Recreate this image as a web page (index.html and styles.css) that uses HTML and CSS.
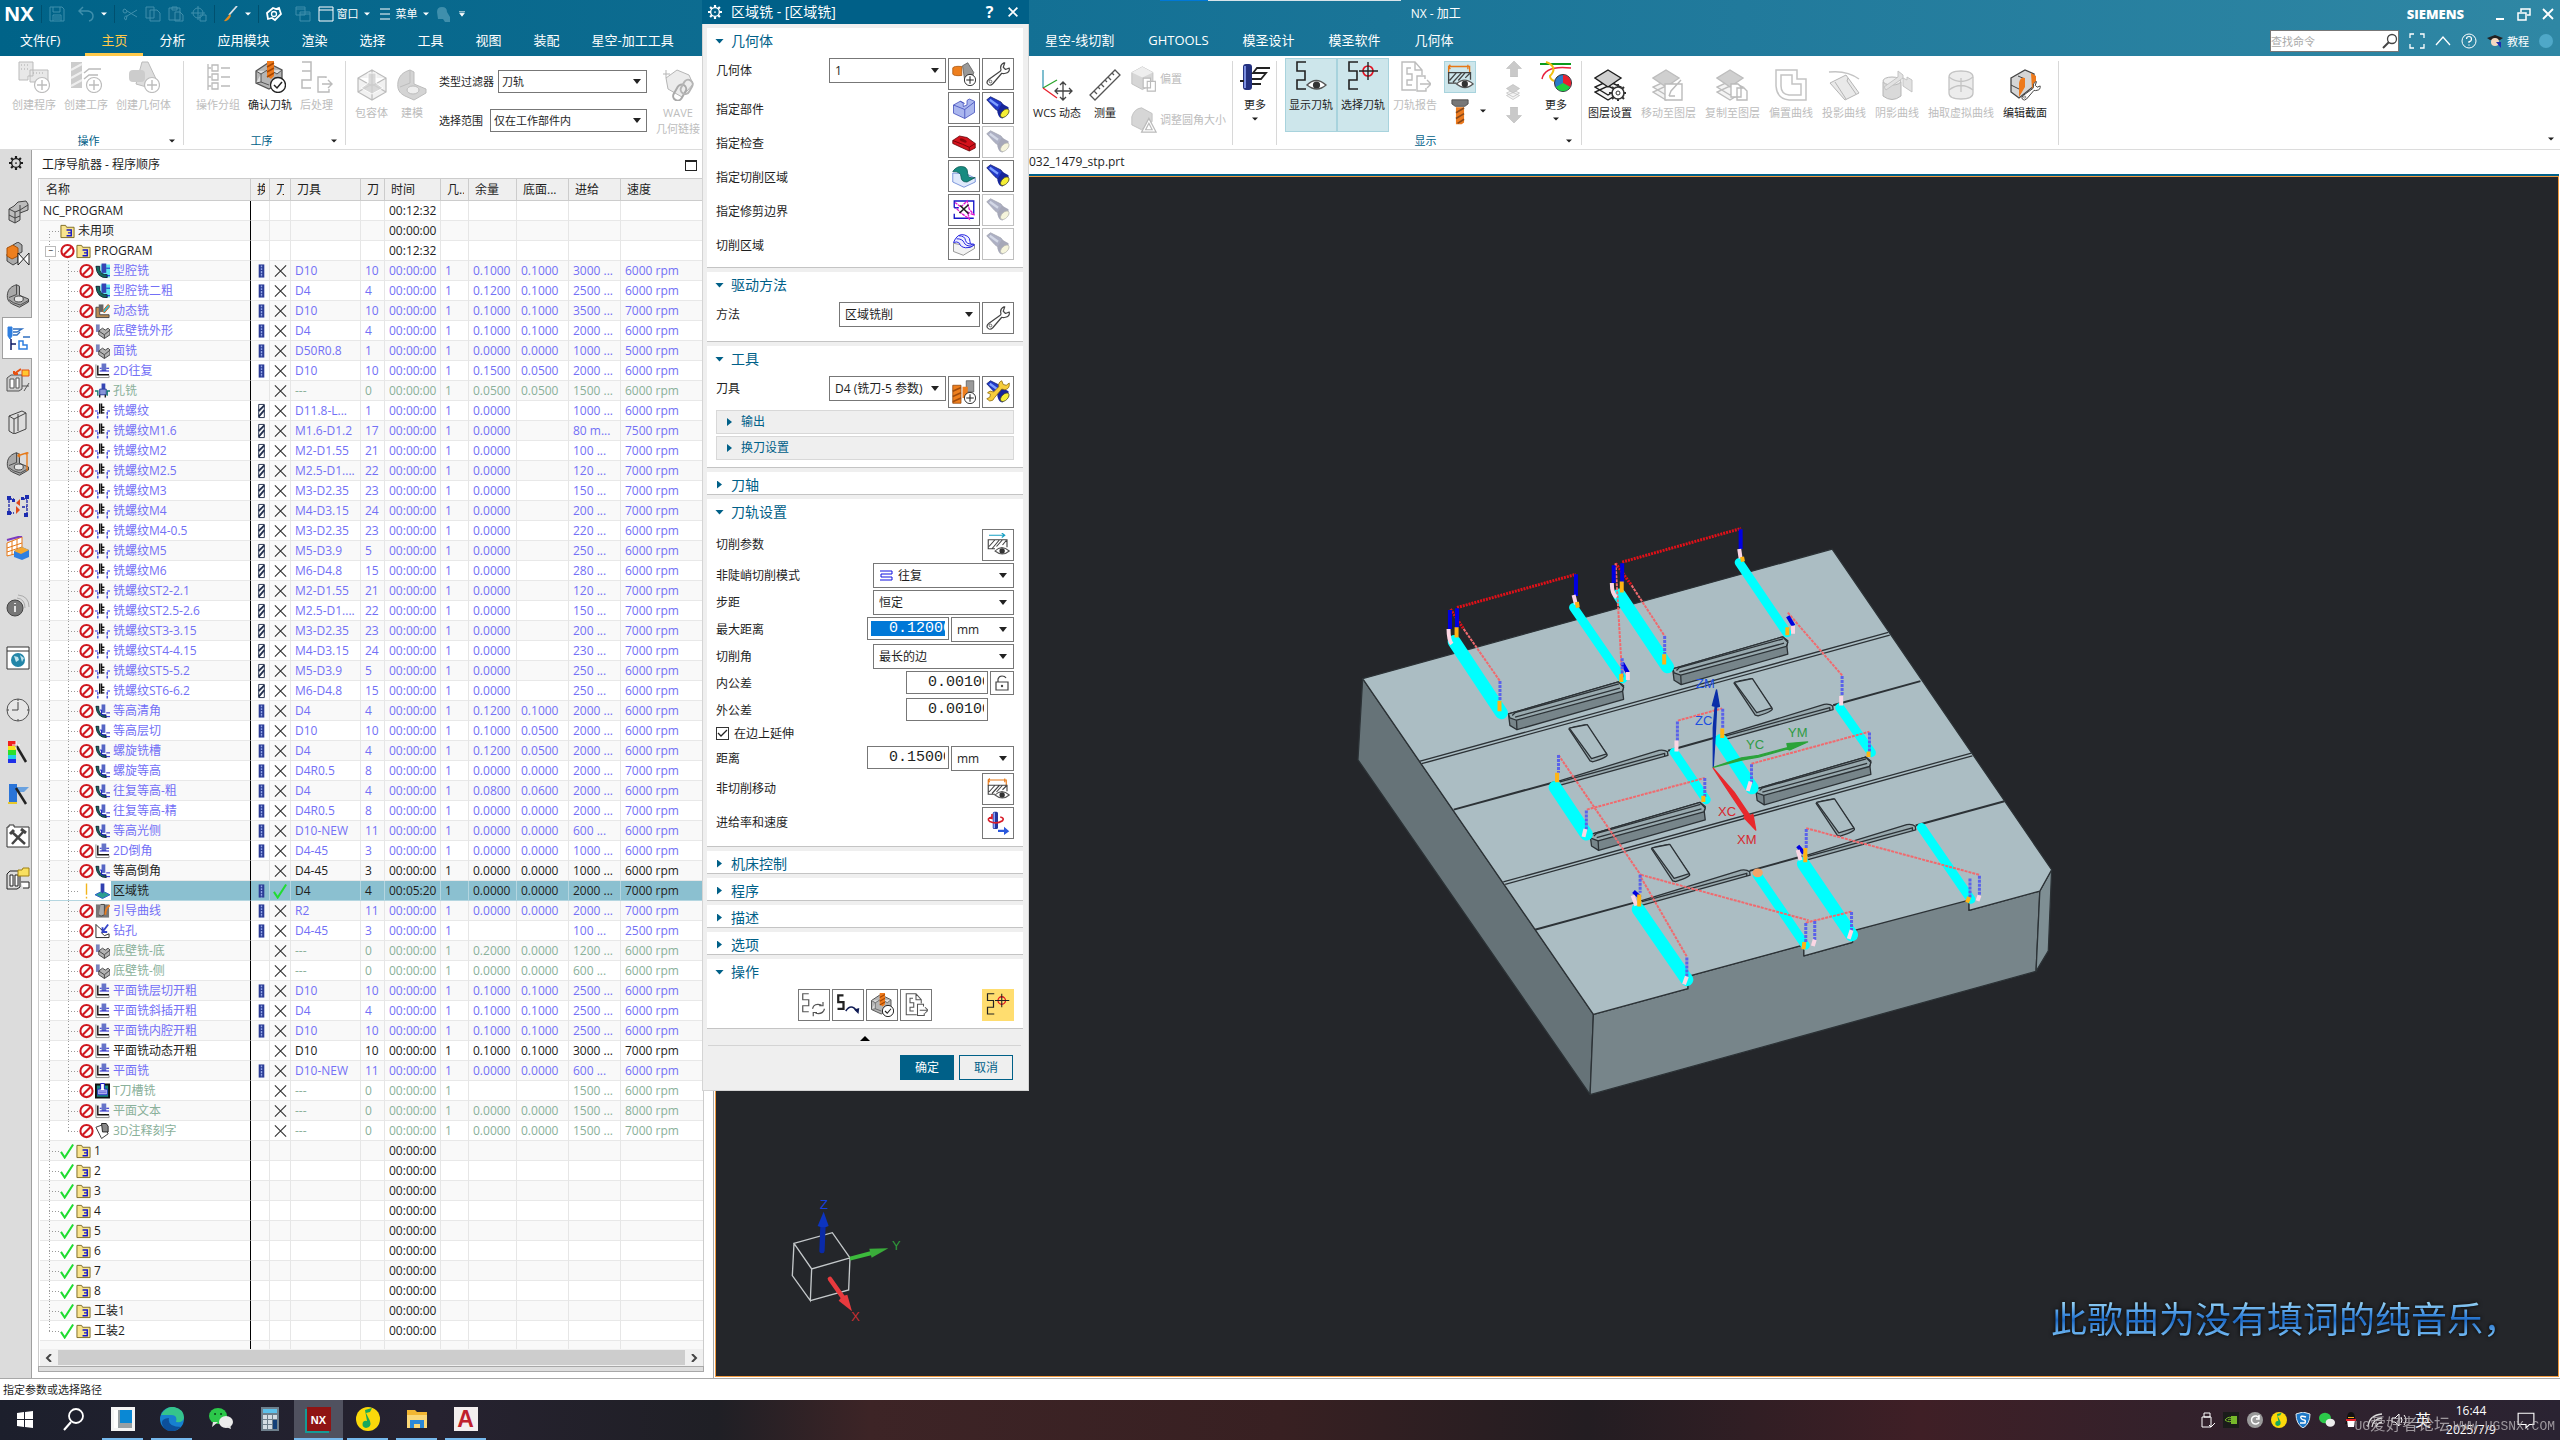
FILE: index.html
```html
<!DOCTYPE html>
<html lang="zh-CN">
<head>
<meta charset="utf-8">
<title>NX - 加工</title>
<link rel="stylesheet" href="styles.css">
</head>
<body>
<svg class="defs" aria-hidden="true">
  <!-- shared marks -->
  <symbol id="caret" viewBox="0 0 8 8"><path d="M0 2h8L4 6z" fill="currentColor"/></symbol>
  <symbol id="plus" viewBox="0 0 32 32"><circle cx="24" cy="24" r="7.500" fill="#fff" stroke="currentColor" stroke-width="1.200"/><path d="M24 19v10M19 24h10" stroke="currentColor" stroke-width="1.400"/></symbol>
  <!-- ribbon -->
  <symbol id="r-prog" viewBox="0 0 32 32"><path d="M1 1h14v14H10v4H1zM12 9h18v12H12z" fill="#e8e8e8" stroke="#bbb"/><path d="M3 4h9M3 8h9M15 12h12" stroke="#aaa" stroke-dasharray="1 2"/><use href="#plus"/></symbol>
  <symbol id="r-op" viewBox="0 0 32 32"><path d="M1 1h11v26H1z" fill="#ccc"/><path d="M1 9l11-6M1 17l11-6M1 25l11-6" stroke="#eee" stroke-width="2"/><path d="M14 12l5-4h12M14 18l5-4h9" stroke="#bbb" fill="none" stroke-width="1.500"/><use href="#plus"/></symbol>
  <symbol id="r-geom" viewBox="0 0 32 32"><path d="M14 1h6l9 19-7 7-14-4z" fill="#ddd" stroke="#bbb"/><rect x="1" y="9" width="16" height="12" rx="4" fill="#ccc"/><use href="#plus"/></symbol>
  <symbol id="r-group" viewBox="0 0 32 32"><path d="M6 3v26M6 7h3M6 16h3M6 25h3M19 7h9M19 16h9M19 25h9" stroke="#bbb" stroke-width="1.300" fill="none"/><path d="M10 4h6v6h-6zM10 13h6v6h-6zM10 22h6v6h-6z" fill="#fff" stroke="#bbb" stroke-width="1.300"/></symbol>
  <symbol id="r-verify" viewBox="0 0 32 32"><path d="M2 10l12-8 14 7v11l-13 8L2 22z" fill="#b5b5b5" stroke="#555" stroke-width="1.300"/><path d="M2 10l5 3 8-5 8 5 5-4M7 13v8l-5 1M7 21l8 3" fill="#ddd" stroke="#555"/><path d="M13 0h7v15l-3 3-4-3z" fill="#ee7a1c"/><path d="M13 6l7-4M13 11l7-4M13 16l7-4" stroke="#a64700" stroke-width="1.500"/><circle cx="24" cy="24" r="7.500" fill="#fff" stroke="#222" stroke-width="1.300"/><path d="M20 24l3 3 5-6" stroke="#222" stroke-width="1.500" fill="none"/></symbol>
  <symbol id="r-post" viewBox="0 0 32 32"><path d="M1 1h9v9H1M10 10v9H1v8h9" stroke="#bbb" fill="none" stroke-width="1.500"/><path d="M25 17v-1h-8v15h11v-3M21 23h10M27 19l4 4-4 4" stroke="#bbb" fill="none" stroke-width="1.400"/></symbol>
  <symbol id="r-box" viewBox="0 0 32 32"><path d="M16 1l14 8v14l-14 8-14-8V9zM2 9l14 8 14-8M16 17v14M2 23l14-8 14 8M16 1v16" fill="#f1f1f1" stroke="#bbb" stroke-width="1.200"/><path d="M12 4h8v10l7 5-11 6-11-6 7-5z" fill="#d2d2d2" stroke="#fff" opacity=".8"/></symbol>
  <symbol id="r-model" viewBox="0 0 32 32"><path d="M2 13C3 7 7 3 14 1l4 2v12l12 5v4l-12 7-9-4C3 24 1 20 2 13z" fill="#d4d4d4" stroke="currentColor"/><path d="M14 1v13L4 18" fill="none" stroke="currentColor"/><ellipse cx="17" cy="21" rx="6" ry="4" fill="#eee" stroke="currentColor"/></symbol>
  <symbol id="l-model" viewBox="0 0 32 32"><path d="M2 13C3 7 7 3 14 1l4 2v12l12 5v4l-12 7-9-4C3 24 1 20 2 13z" fill="#a9a9a9" stroke="#444" stroke-width="1.300"/><path d="M14 1v13L4 18M4 21l6 4 9 3 11-6" fill="none" stroke="#444" stroke-width="1.200"/><ellipse cx="17" cy="20" rx="6" ry="4" fill="#e6e6e6" stroke="#444" stroke-width="1.300"/></symbol>
  <symbol id="r-wave" viewBox="0 0 32 32"><path d="M1 5h7M4 1v8M15 1l12 5 4 9-11 13L6 20 4 9z" fill="#ececec" stroke="#b5b5b5"/><rect x="14" y="15" width="9" height="17" rx="4.500" transform="rotate(30 18 22)" fill="none" stroke="#aaa" stroke-width="2"/><rect x="20" y="10" width="9" height="15" rx="4.500" transform="rotate(30 24 18)" fill="none" stroke="#b5b5b5" stroke-width="2"/></symbol>
  <symbol id="r-wcs" viewBox="0 0 32 32"><path d="M2 1v18" stroke="#3a9bb5" stroke-width="1.300"/><path d="M2 19L16 11" stroke="#2aa42a" stroke-width="1.300"/><path d="M2 19l14 10" stroke="#e8202c" stroke-width="1.300"/><path d="M22 13v18M14 22h17M19 16l3-3 3 3M19 28l3 3 3-3M17 19l-3 3 3 3M28 19l3 3-3 3" stroke="#444" stroke-width="1.300" fill="none"/></symbol>
  <symbol id="r-rule" viewBox="0 0 32 32"><path d="M26 1l5 5L6 31l-5-5zM5 22l3 3M9 18l2 2M12 15l3 3M16 11l2 2M19 8l3 3M23 4l2 2" fill="#fff" stroke="#555" stroke-width="1.300"/></symbol>
  <symbol id="r-off" viewBox="0 0 32 32"><path d="M1 8l13-7 13 7v14l-13 7-13-7z" fill="#d6d6d6" stroke="#bbb"/><path d="M1 8l13 6 13-6-13-7z" fill="#eee"/><path d="M15 15h9v12h-9zM20 19h10v12H20z" fill="#fff" stroke="#bbb" stroke-width="1.400"/></symbol>
  <symbol id="r-blend" viewBox="0 0 32 32"><path d="M1 12Q4 2 13 1l13 7v10L13 28 1 22z" fill="#d6d6d6" stroke="#bbb"/><path d="M22 14l9 17H13zM22 20l4 8h-8z" fill="#fff" stroke="#bbb" stroke-width="1.500"/></symbol>
  <symbol id="r-more1" viewBox="0 0 32 32"><rect x="4" y="3" width="9" height="26" rx="3" fill="#23307f"/><path d="M6 5v22" stroke="#7b8ee0" stroke-width="2"/><path d="M31 7H18l-4 5h13l-5 6h-9M1 20h4M13 23h9" stroke="#222" stroke-width="1.800" fill="none"/></symbol>
  <symbol id="snake" viewBox="0 0 32 32"><path d="M11 1H2v9h8v9H2v9h9" stroke="currentColor" stroke-width="1.600" fill="none"/></symbol>
  <symbol id="eye" viewBox="0 0 32 32"><path d="M12 24q9-9 19 0-9 8-19 0z" fill="#fff" stroke="#555" stroke-width="1.400"/><circle cx="21.500" cy="24" r="3.600" fill="#333"/></symbol>
  <symbol id="r-show" viewBox="0 0 32 32"><use href="#snake"/><use href="#eye"/></symbol>
  <symbol id="r-pick" viewBox="0 0 32 32"><use href="#snake"/><circle cx="21" cy="10" r="5" fill="none" stroke="#e01020" stroke-width="1.700"/><path d="M21 1v18M12 10h19" stroke="#222" stroke-width="1.400"/></symbol>
  <symbol id="r-report" viewBox="0 0 32 32"><path d="M17 29H3V1h13l7 8v5M16 1v8h7M12 7H8v6h5v6H8v5h5" stroke="currentColor" stroke-width="1.400" fill="none"/><path d="M26 18v-3H18v15h9v-3M21 23h10M28 19l4 4-4 4" stroke="currentColor" stroke-width="1.400" fill="none"/></symbol>
  <symbol id="r-noncut" viewBox="0 0 32 32"><path d="M3 11V4h24v7M5 2L3 4l2 3M25 2v5" stroke="#e67817" stroke-width="1.500" fill="none"/><path d="M28 19v-8H3v12h9M4 20l8-9M8 22l10-11M14 20l8-9M22 17l5-5" stroke="#444" stroke-width="1.500" fill="none"/><use href="#eye"/></symbol>
  <symbol id="r-cutparam" viewBox="0 0 32 32"><path d="M4 3h20M21 0l4 3-4 3" stroke="#16a0c4" stroke-width="1.500" fill="none"/><path d="M28 19V9H3v12h9M4 18l8-9M8 21l10-12M14 18l8-9M22 16l5-6" stroke="#444" stroke-width="1.500" fill="none"/><use href="#eye"/></symbol>
  <symbol id="r-drill" viewBox="0 0 32 32"><path d="M6 1h20v5l-4 3H10L6 6z" fill="#777" stroke="#444"/><path d="M11 10h10v19l-3 2h-7z" fill="#ec7a1e"/><path d="M11 17l10-6M11 24l10-6M13 30l8-5" stroke="#8b4a18" stroke-width="2"/></symbol>
  <symbol id="r-up" viewBox="0 0 32 32"><path d="M16 0l15 15h-8v17H9V15H1z" fill="#c9c9c9" stroke="#b5b5b5"/></symbol>
  <symbol id="r-down" viewBox="0 0 32 32"><path d="M16 32L1 17h8V0h14v17h8z" fill="#c9c9c9" stroke="#b5b5b5"/></symbol>
  <symbol id="stack" viewBox="0 0 32 32"><path d="M14 17l13 6-13 8L1 23zM14 12l13 6-13 8L1 18z" fill="#f4f4f4" stroke="currentColor" stroke-width="1.400"/><path d="M14 1l13 8-13 9L1 9z" fill="#cfcfcf" stroke="currentColor" stroke-width="1.400"/></symbol>
  <symbol id="r-color" viewBox="0 0 32 32"><path d="M0 3h31" stroke="#0a9a1c" stroke-width="2"/><path d="M2 18C4 8 14 5 31 7" stroke="#e8203c" fill="none" stroke-width="1.500"/><path d="M6 1c8 3 10 8 4 14 0 3 2 4 4 5" stroke="#f0c010" fill="none" stroke-width="2"/><circle cx="23" cy="22" r="8.500" fill="#2a7ac8" stroke="#333"/><path d="M23 22v-8a8 8 0 0 1 7 12z" fill="#e8202c"/><path d="M23 22l7 4a8 8 0 0 1-14 0z" fill="#1fd03c"/></symbol>
  <symbol id="r-layset" viewBox="0 0 32 32"><use href="#stack"/><circle cx="24" cy="24" r="6" fill="#fff" stroke="#333" stroke-width="1.600"/><circle cx="24" cy="24" r="2" fill="none" stroke="#333"/><path d="M24 15v3M24 30v2M15 24h3M30 24h2M18 18l2 2M28 28l2 2M30 18l-2 2M18 30l2-2" stroke="#333" stroke-width="2"/></symbol>
  <symbol id="r-laymove" viewBox="0 0 32 32"><use href="#stack"/><path d="M13 15h17v16H13zM17 27l2-5 10-11M17 27h6" fill="#fff" stroke="#bbb" stroke-width="1.400"/></symbol>
  <symbol id="r-laycopy" viewBox="0 0 32 32"><use href="#stack"/><path d="M15 15h7l3 3v10H15zM21 19h7l3 3v9H21z" fill="#fff" stroke="#bbb" stroke-width="1.400"/></symbol>
  <symbol id="r-offc" viewBox="0 0 32 32"><path d="M1 1h21v9h9v21H14Q2 30 1 17z" fill="#fff" stroke="#c4c4c4" stroke-width="1.500"/><path d="M6 6h11v9h9v11H14Q6 25 6 17z" fill="none" stroke="#c4c4c4" stroke-width="1.500"/></symbol>
  <symbol id="r-proj" viewBox="0 0 32 32"><path d="M1 3q18-2 30 7" fill="none" stroke="#c4c4c4" stroke-width="1.500"/><path d="M2 14l16-8 13 18-14 7z" fill="#e9e9e9" stroke="#b5b5b5"/><path d="M7 13l11 17M20 9l-1 3 9 13" fill="none" stroke="#b5b5b5"/></symbol>
  <symbol id="r-shad" viewBox="0 0 32 32"><path d="M2 13v14q9 7 18 0V13z" fill="#d9d9d9" stroke="#b5b5b5"/><ellipse cx="11" cy="12" rx="9" ry="4" fill="#eee" stroke="#b5b5b5"/><path d="M17 2l5 4v3l4 2V8l5 3v12l-9-6V9L5 21l-2-3L17 8z" fill="#e2e2e2" stroke="#c4c4c4"/></symbol>
  <symbol id="r-ext" viewBox="0 0 32 32"><path d="M4 8q0-6 12-6t12 6v16q0 6-12 6T4 24z" fill="#ececec" stroke="#c4c4c4" stroke-width="1.300"/><path d="M4 8q12 9 24 0M4 21q12-9 24 0M16 9v14" fill="none" stroke="#c4c4c4" stroke-width="1.300"/></symbol>
  <symbol id="r-sect" viewBox="0 0 32 32"><path d="M2 9l14-8 9 4v12l-15 12-8-6z" fill="#d5d5d5" stroke="#444" stroke-width="1.300"/><path d="M2 16l8 4M9 7l7 3" stroke="#444"/><path d="M10 14q1-6 6-5v9l-6 10zM22 4l5 3v9l-4 4z" fill="#ee7a1c"/><use href="#wrench" transform="translate(12 12) scale(.62)"/></symbol>
  <symbol id="wrench" viewBox="0 0 32 32"><path d="M20 10q-2-6 4-9l1 0-2 6 3 3 5-2q1 6-5 7-3 1-5 0L9 29q-4 4-7 0-2-3 2-6l14-10q2-1 2-3z" fill="#fff" stroke="#444" stroke-width="1.600" stroke-linejoin="round"/><circle cx="6" cy="26" r="1.800" fill="none" stroke="#444"/></symbol>
  <!-- dialog -->
  <symbol id="d-geom" viewBox="0 0 32 32"><path d="M14 5l7-4 8 13-3 9-9 2z" fill="#999" stroke="#555"/><path d="M1 8q1-3 12-2v12Q2 19 1 16z" fill="#ee7f1e" stroke="#a75008"/><use href="#plus"/></symbol>
  <symbol id="d-part" viewBox="0 0 32 32"><path d="M2 12l9-5 4 2v5l5-2V6l3-2 7 3v15l-13 8-15-7z" fill="#aab6ee" stroke="#3a45b8"/><path d="M2 12l15 6 13-10M17 18v12M11 7l6 3" fill="none" stroke="#3a45b8"/></symbol>
  <symbol id="flash" viewBox="0 0 32 32"><path d="M1 5l5-4 14 7 3 4-7 8-4-3z" fill="#2139c8" stroke="#101c66"/><path d="M5 5l11 8" stroke="#7fa0ff" stroke-width="3"/><path d="M21 10l9 5v7l-8 8q-5 0-7-9z" fill="#16259a"/><ellipse cx="25" cy="23" rx="4" ry="7" transform="rotate(45 25 23)" fill="#f4ee36" stroke="#4d4d20"/></symbol>
  <symbol id="d-clamp" viewBox="0 0 32 32"><path d="M1 14l9-6 10 2 11 8v6l-8 4-9-4-13-6z" fill="#d4121c" stroke="#5c0004"/><path d="M1 14l13 5 9 4 8-5M23 23v5" fill="none" stroke="#5c0004"/><ellipse cx="15" cy="14" rx="5" ry="2" transform="rotate(25 15 14)" fill="#8c060c"/></symbol>
  <symbol id="d-area" viewBox="0 0 32 32"><path d="M1 12v12l15 7 15-7v-5l-12-6z" fill="#dfe9fb" stroke="#5a79d0"/><path d="M1 10q6-9 16-6 4 2 4 9t10 5l-11 6q-8 0-8-7T1 10z" fill="#178b80" stroke="#0a5750"/></symbol>
  <symbol id="d-trim" viewBox="0 0 32 32"><path d="M3 13V4h26v18M3 21v6h26M3 13h6" fill="none" stroke="#1616c8" stroke-width="1.800"/><path d="M4 6l8 6 8-8 3 11 7 8-9-4 2 9-11-8-7-7" fill="none" stroke="#e016d0" stroke-width="1.800" stroke-dasharray="4 1"/><path d="M11 10l11 11M22 9L10 20" stroke="#222" stroke-width="2.200"/></symbol>
  <symbol id="d-region" viewBox="0 0 32 32"><path d="M2 15v11l13 5 15-9v-5l-8 2z" fill="#f2f2f2" stroke="#777"/><path d="M2 14Q7 1 17 4l4 2q3 2 3 7t6 4q-5 5-12 4T10 15q-3-3-8-1zM6 9q8 0 10 5t11 5M9 5q8 0 9 6t11 5" fill="#eef" stroke="#2222e0" stroke-width="1.300"/></symbol>
  <symbol id="d-tool" viewBox="0 0 32 32"><path d="M1 7h11v24H1z" fill="#ee7f1e" stroke="#8c4208"/><path d="M1 15l11-5M1 22l11-5M1 29l11-5" stroke="#a04c0c" stroke-width="2"/><path d="M19 1h10v15H19z" fill="#999" stroke="#555"/><path d="M14 9h7v15h-7z" fill="#ee7f1e"/><use href="#plus"/></symbol>
  <symbol id="d-edit" viewBox="0 0 32 32"><use href="#flash"/><path d="M17 9q-1-6 4-8l2 5 4 1 4-3q1 8-6 9l-4-1L11 24q-1 4-6 4l-4-3 4-2 1-4-4-2q3-4 8-1z" fill="#f6cd3c" stroke="#8a6508"/></symbol>
  <symbol id="d-feed" viewBox="0 0 32 32"><rect x="9" y="1" width="7" height="23" rx="2" fill="#24369c"/><path d="M11 2v21" stroke="#8ea6ff" stroke-width="2"/><path d="M8 8q-8 2-3 6 9 4 17-1 3-4-3-5M8 4v6l-4-1" fill="none" stroke="#d81c28" stroke-width="2.200"/><path d="M16 25h8v-4l7 6-7 5v-4h-8z" fill="#2a58dc"/></symbol>
  <symbol id="d-gen" viewBox="0 0 32 32"><path d="M9 1H1v8h8v8H1v8h8" stroke="#555" fill="none" stroke-width="1.600"/><path d="M14 21q2-8 12-5M28 12v5h-5M30 21q-2 8-12 6M15 31v-5h5" fill="none" stroke="#555" stroke-width="1.600"/></symbol>
  <symbol id="d-replay" viewBox="0 0 32 32"><path d="M10 3H3v9h7v9H2" stroke="#222" fill="none" stroke-width="3"/><path d="M13 24q7-11 15 0" fill="none" stroke="#101c55" stroke-width="2"/><path d="M24 22l7-2-1 8z" fill="#101c55"/></symbol>
  <symbol id="gear" viewBox="0 0 16 16"><path d="M8 0v3M8 13v3M0 8h3M13 8h3M2.400 2.400l2 2M11.600 11.600l2 2M13.600 2.400l-2 2M2.400 13.600l2-2" stroke="currentColor" stroke-width="2.500"/><circle cx="8" cy="8" r="5" fill="none" stroke="currentColor" stroke-width="1.600"/><circle cx="8" cy="8" r="1" fill="currentColor"/></symbol>
  <!-- operation tree -->
  <symbol id="folder" viewBox="0 0 16 16"><path d="M1 2h5l1 2h8v11H1z" fill="#f8e38e" stroke="#7d6a20"/><path d="M7 7h5v3H8.500M12 10v3H7" fill="none" stroke="#1818c8" stroke-width="1.500"/></symbol>
  <symbol id="no" viewBox="0 0 16 16"><circle cx="8" cy="8" r="6.500" fill="#fff" stroke="#cf1820" stroke-width="2.200"/><path d="M4 12l8-8" stroke="#cf1820" stroke-width="2.200"/></symbol>
  <symbol id="ok" viewBox="0 0 16 16"><path d="M1 9l4 6L14 1" fill="none" stroke="#21dc32" stroke-width="2.200"/></symbol>
  <symbol id="ex" viewBox="0 0 16 16"><path d="M8 0v12M8 14v2" stroke="#f2b51c" stroke-width="1.500"/></symbol>
  <symbol id="x" viewBox="0 0 16 16"><path d="M2 2l12 12M14 2L2 14" stroke="#333" stroke-width="1.200"/></symbol>
  <symbol id="ta" viewBox="0 0 16 16"><path d="M5 1h6v14H5z" fill="#2b3c96"/><path d="M8 2v13" stroke="#93a6e6" stroke-width="1.500" stroke-dasharray="2 1"/></symbol>
  <symbol id="tb" viewBox="0 0 16 16"><path d="M5 1h6v14H5z" fill="#fff" stroke="#23304e"/><path d="M5 8l6-6M5 14l6-7" stroke="#23304e" stroke-width="2"/></symbol>
  <symbol id="cav" viewBox="0 0 16 16"><path d="M6 1h10v14h-5q-5-1-5-5z" fill="#5fe6f0"/><path d="M1 3h4v4q1 5 8 5v3Q2 16 1 3z" fill="#126a5c" stroke="#123"/><path d="M7 0h5v10H7z" fill="#3545b4"/><path d="M12 5h4M12 13h4" stroke="#1818c8"/></symbol>
  <symbol id="zlv" viewBox="0 0 16 16"><path d="M1 3h3v4q1 5 8 6v2Q2 15 1 3z" fill="#126a5c" stroke="#123"/><path d="M7 1h4v9H7z" fill="#5565c4"/><path d="M5 7h2v5h5M12 10h4M12 14h4" stroke="#1818c8" fill="none"/></symbol>
  <symbol id="dyn" viewBox="0 0 16 16"><path d="M1 4v11h14v-3H5V4z" fill="#b98d55" stroke="#444"/><path d="M4 1h5v8H4z" fill="#666"/><path d="M8 8l6-7 2 2-6 7z" fill="#39b8cc" stroke="#d35e10"/></symbol>
  <symbol id="face" viewBox="0 0 16 16"><path d="M1 1h4v8H1z" fill="#7b85bd"/><path d="M4 8l4-3 3 2 3-2 2 2v5l-6 4-6-4z" fill="#b4b4b4" stroke="#444"/><path d="M4 8l6 4 6-5M10 12v4" fill="none" stroke="#444"/></symbol>
  <symbol id="pla" viewBox="0 0 16 16"><path d="M1 1v14h14v-2" fill="none" stroke="#888"/><path d="M3 2v10h12" fill="none" stroke="#111" stroke-width="1.500"/><path d="M7 0h5v8H7z" fill="#6674c8"/><path d="M5 5h2M12 5h3M5 8h10" stroke="#1818c8" stroke-width="1.200"/></symbol>
  <symbol id="hole" viewBox="0 0 16 16"><path d="M7 0h4v6H7z" fill="#3545b4"/><path d="M5 6h7v6H5z" fill="#8796d8" stroke="#24369c"/><path d="M0 8h3v5M16 8h-3v5" stroke="#157c70" fill="none" stroke-width="1.500"/><path d="M5 12v3M11 12v3" stroke="#222" stroke-width="1.500"/></symbol>
  <symbol id="thr" viewBox="0 0 16 16"><path d="M5 0v11M7 0v11M7 4h3M7 7h3M7 10h3" stroke="#111" stroke-width="1.500"/><path d="M0 8h3v8M16 8h-3v8" stroke="#2430e0" fill="none" stroke-width="1.300" stroke-dasharray="3 1"/></symbol>
  <symbol id="area" viewBox="0 0 16 16"><path d="M0 12l8-4 8 4-8 4z" fill="#2a9d90" stroke="#2c60c8"/><path d="M6 0h4v8l-2 3-2-3z" fill="#3040b0"/></symbol>
  <symbol id="curve" viewBox="0 0 16 16"><path d="M1 1h14v14H1z" fill="#777"/><path d="M6 1h4v11q-4 3-6 0" fill="#aaa" stroke="#444"/><path d="M11 12q0-8 5-10" stroke="#e97c1e" stroke-width="2" fill="none"/></symbol>
  <symbol id="dri" viewBox="0 0 16 16"><path d="M1 1v14h14v-4l-5 2-3-3 2-2-4-3z" fill="#fff" stroke="#222"/><path d="M8 9l6-8M8 4v5h5" stroke="#3444c8" stroke-width="2" fill="none"/></symbol>
  <symbol id="tsl" viewBox="0 0 16 16"><path d="M1 1h14v14H1z" fill="#178b80" stroke="#111" stroke-width="2"/><path d="M6 0h4v6h3v6H3V6h3z" fill="#fff" stroke="#1818c8"/><path d="M4 8h8M4 10h8" stroke="#1818c8"/></symbol>
  <symbol id="txt" viewBox="0 0 16 16"><path d="M1 4l8-3 5 10-7 5z" fill="#fff" stroke="#333"/><path d="M7 0h5l2 3v6H8z" fill="#888" stroke="#222"/></symbol>
</svg>

<div class="app">
  <header class="head">
    <span class="progress"></span>
    <div class="title-row">
      <div class="quick">
        <b class="logo">NX</b><i class="bar"></i>
        <svg class="dim" viewBox="0 0 16 16"><path d="M1 1h12l2 2v12H1zM4 1v5h7V1M4 15V9h8v6M5 11h6M5 13h6" fill="none" stroke="currentColor"/></svg>
        <svg class="dim far" viewBox="0 0 16 16"><path d="M5 1L1 5l4 4M1 5h9q5 1 5 5t-4 5" fill="none" stroke="currentColor" stroke-width="1.500"/></svg>
        <svg class="car"><use href="#caret"/></svg><i class="bar"></i>
        <svg class="dim" viewBox="0 0 16 16"><path d="M5 10L15 4M5 5l10 6M5 5a2 2 0 1 1-2-2zM5 10a2 2 0 1 0-1 4z" fill="none" stroke="currentColor"/></svg>
        <svg class="dim" viewBox="0 0 16 16"><path d="M1 1h8v11H1zM5 4h7l3 3v8H5z" fill="#0a6589" stroke="currentColor"/></svg>
        <svg class="dim" viewBox="0 0 16 16"><path d="M1 2h11v12H1zM4 1h5v3H4zM7 6h5l3 3v6H7z" fill="#0a6589" stroke="currentColor"/></svg>
        <svg class="dim" viewBox="0 0 16 16"><circle cx="7" cy="7" r="5" fill="none" stroke="currentColor"/><path d="M7 0v14M0 7h14M9 9h6v6H9z" fill="none" stroke="currentColor"/></svg><i class="bar"></i>
        <svg viewBox="0 0 16 16"><path d="M15 0L7 9" stroke="#d8e0e6" stroke-width="1.800"/><path d="M8 8l-6 7q4 1 7-5z" fill="#e08a1e"/></svg>
        <svg class="car"><use href="#caret"/></svg><i class="bar"></i>
        <svg viewBox="0 0 16 16"><path d="M1 7l6-5 3 1 3-1 2 6-6 6-3-2-4 1z" fill="none" stroke="#fff" stroke-width="1.800"/><circle cx="8" cy="8" r="2.500" fill="none" stroke="#fff" stroke-width="1.300"/></svg>
        <svg class="dim far" viewBox="0 0 16 16"><path d="M1 1h9v8H1zM1 3h9M5 6h10v9H5zM5 8h10" fill="none" stroke="currentColor"/></svg>
        <svg viewBox="0 0 16 16"><path d="M1 1h14v14H1zM1 4h14" fill="none" stroke="#fff"/></svg>
        <span class="qt">窗口</span><svg class="car"><use href="#caret"/></svg>
        <svg viewBox="0 0 16 16"><path d="M3 3h10M3 8h10M3 13h10" stroke="#fff"/></svg>
        <span class="qt">菜单</span><svg class="car"><use href="#caret"/></svg>
        <svg class="dim" viewBox="0 0 16 16"><path d="M1 6q0-5 5-5t5 5l3 5v5H9l-2-3H2z" fill="currentColor"/></svg>
        <svg class="car" viewBox="0 0 8 8"><path d="M0 1h8M1 3h6L4 7z" stroke="#fff" fill="#fff"/></svg>
      </div>
      <div class="win-title">NX - 加工</div>
      <div class="win">
        <b>SIEMENS</b>
        <button aria-label="最小化"><svg viewBox="0 0 16 16"><path d="M4 13h8" stroke="#fff" stroke-width="2"/></svg></button>
        <button aria-label="还原"><svg viewBox="0 0 16 16"><path d="M5 6V3h9v6h-3M2 7h8v7H2z" fill="none" stroke="#fff" stroke-width="1.500"/></svg></button>
        <button aria-label="关闭"><svg viewBox="0 0 16 16"><path d="M3 3l10 10M13 3L3 13" stroke="#fff" stroke-width="1.800"/></svg></button>
      </div>
    </div>
    <nav class="tabs">
      <div class="left-part"><a class="file" href="#">文件(F)</a><a class="on" href="#">主页</a><a href="#">分析</a><a href="#">应用模块</a><a href="#">渲染</a><a href="#">选择</a><a href="#">工具</a><a href="#">视图</a><a href="#">装配</a><a href="#">星空-加工工具</a></div>
      <div class="right-part"><a href="#">星空-线切割</a><a href="#">GHTOOLS</a><a href="#">模圣设计</a><a href="#">模圣软件</a><a href="#">几何体</a></div>
      <div class="find">
        <label class="search"><input type="text" placeholder="查找命令" aria-label="查找命令"><svg viewBox="0 0 16 16"><circle cx="10" cy="6" r="4.500" fill="none" stroke="#444" stroke-width="1.300"/><path d="M7 9l-6 6" stroke="#444" stroke-width="2"/></svg></label>
        <svg viewBox="0 0 16 16"><path d="M1 5V1h4M11 1h4v4M15 11v4h-4M5 15H1v-4" fill="none" stroke="#fff" stroke-width="1.300"/></svg>
        <svg viewBox="0 0 16 16"><path d="M1 12l7-8 7 8" fill="none" stroke="#fff" stroke-width="1.300"/></svg>
        <svg viewBox="0 0 16 16"><circle cx="8" cy="8" r="7" fill="none" stroke="#fff"/><path d="M5.500 6q0-2.500 2.500-2.500T10.500 6 8 8.500V10M8 11.500v1" fill="none" stroke="#fff" stroke-width="1.200"/></svg>
        <svg viewBox="0 0 16 16"><path d="M0 5l8-3 8 3-3 2H3z" fill="#222"/><circle cx="8" cy="9" r="4" fill="#f5d9c0"/><path d="M9 9h5v6z" fill="#1c2cb0"/></svg>
        <span class="learn">教程</span><i class="dot"></i>
      </div>
    </nav>
  </header>

  <section class="ribbon">
    <div class="left-part">
      <div class="grp">
        <div class="row"><button class="rb off"><svg><use href="#r-prog"/></svg>创建程序</button><button class="rb off"><svg><use href="#r-op"/></svg>创建工序</button><button class="rb off"><svg><use href="#r-geom"/></svg>创建几何体</button></div>
        <div class="cap"><span>操作</span><svg><use href="#caret"/></svg></div>
      </div>
      <div class="grp">
        <div class="row"><button class="rb off"><svg><use href="#r-group"/></svg>操作分组</button><button class="rb"><svg><use href="#r-verify"/></svg>确认刀轨</button><button class="rb off"><svg><use href="#r-post"/></svg>后处理</button></div>
        <div class="cap"><span>工序</span><svg><use href="#caret"/></svg></div>
      </div>
      <div class="grp tall">
        <div class="row"><button class="rb off"><svg><use href="#r-box"/></svg>包容体</button><button class="rb off"><svg><use href="#r-model"/></svg>建模</button>
          <div class="filters">
            <label>类型过滤器<select><option>刀轨</option></select></label>
            <label>选择范围<select><option>仅在工作部件内</option></select></label>
          </div>
          <button class="rb off"><svg><use href="#r-wave"/></svg>WAVE<br>几何链接</button></div>
      </div>
    </div>
    <div class="right-part">
      <div class="grp tall flush">
        <div class="row"><button class="rb"><svg><use href="#r-wcs"/></svg>WCS 动态</button><button class="rb"><svg><use href="#r-rule"/></svg>测量</button>
          <div class="pair"><button class="sm off"><svg><use href="#r-off"/></svg>偏置</button><button class="sm off"><svg><use href="#r-blend"/></svg>调整圆角大小</button></div></div>
      </div>
      <div class="grp slim"><div class="row"><button class="rb"><svg><use href="#r-more1"/></svg>更多<svg class="c"><use href="#caret"/></svg></button></div></div>
      <div class="grp disp">
        <div class="row"><button class="rb hot"><svg><use href="#r-show"/></svg>显示刀轨</button><button class="rb hot"><svg><use href="#r-pick"/></svg>选择刀轨</button><button class="rb off"><svg><use href="#r-report"/></svg>刀轨报告</button>
          <div class="mini"><button class="hot" aria-label="非切削"><svg><use href="#r-noncut"/></svg></button><button class="drill" aria-label="刀具显示"><svg><use href="#r-drill"/></svg></button></div>
          <svg class="c mid"><use href="#caret"/></svg>
          <div class="arrows"><svg><use href="#r-up"/></svg><svg class="gray"><use href="#stack"/></svg><svg><use href="#r-down"/></svg></div>
          <button class="rb"><svg><use href="#r-color"/></svg>更多<svg class="c"><use href="#caret"/></svg></button></div>
        <div class="cap"><span>显示</span><svg><use href="#caret"/></svg></div>
      </div>
      <div class="grp tall layer">
        <div class="row"><button class="rb"><svg><use href="#r-layset"/></svg>图层设置</button><button class="rb off"><svg><use href="#r-laymove"/></svg>移动至图层</button><button class="rb off"><svg><use href="#r-laycopy"/></svg>复制至图层</button><button class="rb off"><svg><use href="#r-offc"/></svg>偏置曲线</button><button class="rb off"><svg><use href="#r-proj"/></svg>投影曲线</button><button class="rb off"><svg><use href="#r-shad"/></svg>阴影曲线</button><button class="rb off"><svg><use href="#r-ext"/></svg>抽取虚拟曲线</button><button class="rb"><svg><use href="#r-sect"/></svg>编辑截面</button></div>
      </div>
    </div>
    <svg class="ribbon-more"><use href="#caret"/></svg>
  </section>

  <main class="work">
    <nav class="rail">
      <button class="cog" aria-label="设置"><svg><use href="#gear"/></svg></button>
      <button aria-label="装配导航器"><svg viewBox="0 0 24 24"><path d="M3 9l5-3 4-4 8-1 2 3v6l-8 3v7l-5 3-6-3z" fill="#bdbdbd" stroke="#444"/><path d="M3 9l6 3 5-2 8-5M9 12v11M3 15l6 3 5-2M14 5v8" fill="none" stroke="#444"/></svg></button>
      <button aria-label="约束导航器"><svg viewBox="0 0 24 24"><path d="M1 12v7l6 4 5-3v-9zM7 3l5-3 4 3v7l-4 2z" fill="#aaa" stroke="#444"/><path d="M1 6l6-3 5 3v8l-6 3-5-3z" fill="#ee7f1e" stroke="#a75008"/><path d="M12 11v12l11-12v12z" fill="#fff" stroke="#222"/></svg></button>
      <button aria-label="部件导航器"><svg><use href="#l-model"/></svg></button>
      <button class="sel" aria-label="工序导航器"><svg viewBox="0 0 24 24"><path d="M2 1h4v9l-2 3-2-3z" fill="#2f7fe0" stroke="#2f7fe0"/><path d="M7 3h9l-5 3H7M7 9h4l3-3M17 11h7" fill="none" stroke="#2f6fc0" stroke-width="1.300"/><path d="M5 13v11M5 18h5" stroke="#101c66" stroke-width="1.500"/><path d="M13 15h4v4h4v4h-8z" fill="#fff" stroke="#2f7fe0" stroke-width="1.500"/></svg></button>
      <button aria-label="机床导航器"><svg viewBox="0 0 24 24"><path d="M1 10l4-3h11v14l-3 2H1z" fill="#ccc" stroke="#555"/><path d="M4 11h4v9H4zM10 10h3v10h-3zM16 18h7M18 23l5-8" fill="#fff" stroke="#555"/><path d="M8 6l7-5M8 6V3M8 6h4" stroke="#e65010" stroke-width="2"/><path d="M16 2h7v6h-7z" fill="#ffc730" stroke="#e65010"/></svg></button>
      <button aria-label="重用库"><svg viewBox="0 0 24 24"><path d="M3 6l13-5 4 2v16l-12 5-5-3zM3 6l5 3 12-6M8 9v15M12 4v17" fill="#ddd" stroke="#444"/></svg></button>
      <button aria-label="检查"><svg viewBox="0 0 32 32"><use href="#l-model"/><path d="M16 5l12-4v24M18 2l-2 3 3 2M26 3l4-2" fill="none" stroke="#e67817" stroke-width="1.800"/></svg></button>
      <button aria-label="流程"><svg viewBox="0 0 24 24"><path d="M3 2v20M3 5h5M3 19h5M21 2v20M16 5h5M16 13h5" fill="none" stroke="#1620a8" stroke-dasharray="3 1" stroke-width="1.300"/><path d="M1 2h4v4H1zM6 5h3v3H6zM1 17h4v4H1zM19 1h4v4h-4zM15 3h3v3h-3zM18 19h4v4h-4z" fill="#1c2cb0"/><path d="M14 5v7l-4-3z" fill="#e04a18"/><path d="M10 12l4 4-4 4z" fill="#e04a18"/></svg></button>
      <button aria-label="表格"><svg viewBox="0 0 24 24"><path d="M1 7l15-6v15L1 20zM1 12l15-5M1 16l15-5M6 5v14M11 3v14" fill="#fff" stroke="#e67817"/><path d="M1 4l15-4" stroke="#7a3ac0" stroke-width="2"/><path d="M8 15l8-4 7 3v7l-7 3-8-3z" fill="#2f7fe0"/><path d="M8 15l8-4 7 3-8 4z" fill="#f4a830"/></svg></button>
      <button class="gap-a" aria-label="信息"><svg viewBox="0 0 24 24"><circle cx="9" cy="14" r="8" fill="#777" stroke="#444"/><path d="M9 12v6M9 9v1" stroke="#fff" stroke-width="1.600"/><path d="M11 4q8 1 8 10M12 1q11 1 11 12" fill="none" stroke="#aaa"/></svg></button>
      <button class="gap-b" aria-label="浏览器"><svg viewBox="0 0 24 24"><path d="M1 1h22v22H1zM1 5h22" fill="#fff" stroke="#333"/><circle cx="12" cy="14" r="7" fill="#2386a8"/><path d="M8 10l4 1 1 3-3 2zM14 9l4 3-2 4z" fill="#bfe4ee"/></svg></button>
      <button class="gap-b" aria-label="历史"><svg viewBox="0 0 24 24"><circle cx="12" cy="12" r="11" fill="#e6e6e6" stroke="#555"/><path d="M12 4v8H6M12 1v2M12 21v2M1 12h2M21 12h2" fill="none" stroke="#444"/></svg></button>
      <button aria-label="颜色"><svg viewBox="0 0 24 24"><path d="M2 1h8v5H2z" fill="#f02020"/><path d="M2 6h8v4H2z" fill="#f6e420"/><path d="M2 10h8v5H2z" fill="#2be02b"/><path d="M2 15h8v4H2z" fill="#20d0e8"/><path d="M2 19h8v4H2z" fill="#2030e8"/><path d="M10 5l10 17" stroke="#222" stroke-width="2.500"/><path d="M10 1v8M6 5h8" stroke="#fff"/></svg></button>
      <button aria-label="加工向导"><svg viewBox="0 0 24 24"><path d="M3 2h8v18H3z" fill="#2a74d8"/><path d="M11 5h12l-5 5h-7" fill="#6aa2e0"/><path d="M10 6l10 16" stroke="#222" stroke-width="2.500"/><path d="M2 21h9" stroke="#e8c82c" stroke-width="2"/></svg></button>
      <button aria-label="工具"><svg viewBox="0 0 24 24"><path d="M1 3h2V1h5v2h15v20H1z" fill="#fff" stroke="#333"/><path d="M6 20L18 7M6 8l13 12" stroke="#444" stroke-width="2.500"/><path d="M15 5l5 4M4 10l4-4" stroke="#444" stroke-width="3"/></svg></button>
      <button aria-label="机床"><svg viewBox="0 0 24 24"><path d="M1 8l3-3h10v16l-3 2H1z" fill="#ddd" stroke="#222"/><path d="M4 9h3v11H4zM9 9h3v11H9zM15 16h8v6h-6" fill="#fff" stroke="#222"/><path d="M12 4h4l1-2h6v8H12z" fill="#f8e060" stroke="#a08010"/></svg></button>
    </nav>

    <section class="nav">
      <h1>工序导航器 - 程序顺序<button class="max" aria-label="最大化"></button></h1>
      <div class="frame">
        <div class="scroll">
          <table>
            <colgroup><col class="c1"><col class="c2"><col class="c3"><col class="c4"><col class="c5"><col class="c6"><col class="c7"><col class="c8"><col class="c9"><col class="c10"><col></colgroup>
            <thead><tr><th>名称</th><th><span class="cut">换刀</span></th><th><span class="cut">刀轨</span></th><th>刀具</th><th>刀</th><th>时间</th><th><span class="cut wide-cut">几...</span></th><th>余量</th><th>底面...</th><th>进给</th><th>速度</th></tr></thead>
            <tbody id="rows"></tbody>
          </table>
        </div>
        <div class="hbar"><svg viewBox="0 0 8 8"><path d="M6 0L2 4l4 4" fill="none" stroke="#444" stroke-width="2"/></svg><i></i><svg viewBox="0 0 8 8"><path d="M2 0l4 4-4 4" fill="none" stroke="#444" stroke-width="2"/></svg></div>
      </div>
      <div class="split"></div>
    </section>

    <section class="view">
      <div class="file-tab">032_1479_stp.prt</div>
      <div class="canvas">
        <svg viewBox="716 177 1842 1199">
          <g class="model" transform="translate(1340 500) scale(.4719 .3954)">
            <path d="M48 452L537 1301l-7 203L38 657z" fill="#667378"/>
            <path d="M537 1301l200-65v-31l246-80v28l103-34v-29l247-82v30l150-49-8 203-945 312z" fill="#77858a"/>
            <path d="M1483 989l25-54-7 205-26 52z" fill="#7f8f94"/>
            <path d="M48 452L1043 124l465 811-25 54-150 49v-26l-247 78v29l-103 34v-28l-246 80v31l-200 65z" fill="#abbdc3"/>
            <g fill="none" class="edge thin"><path d="M168 661l994-326M173 667l992-325M346 966l992-326M350 972l990-325"/></g>
            <g fill="none" class="edge thick"><path d="M241 783l215-70M695 634l112-37M1045 519l185-61M413 1087l215-70M868 938l112-37M1220 823l188-61"/></g>
            <g id="bar"><path d="M357 541l233-81 11 10-2 14 2 20-226 77-15-11z" fill="#77858a"/><path d="M357 541l233-81 11 14-3 10-224 73-14-6z" fill="#98a9ae"/><path d="M365 545l6-7 220-73M371 549l222-73M374 557l1 24" fill="none"/></g>
            <use href="#bar" x="348" y="-114"/><use href="#bar" x="173" y="305"/><use href="#bar" x="524" y="190"/>
            <g id="pad"><path d="M485 579q0-4 37-11l44 76q2 6-30 18l-6-2z" fill="#98a9ae"/><path d="M486 577l38-9 41 74-32 12z" fill="#abbdc3"/></g>
            <use href="#pad" x="350" y="-116"/><use href="#pad" x="175" y="303"/><use href="#pad" x="524" y="188"/>
            <g id="slot"><path d="M460 712l216-79q12-2 18 4l1 9-230 76-5-5z" fill="#98a9ae"/><path d="M466 713l222-72v7" fill="none"/></g>
            <use href="#slot" x="350" y="-116"/><use href="#slot" x="174" y="303"/><use href="#slot" x="525" y="188"/>
            <g class="wide"><path d="M242 358l100 180M592 240l102 182M456 727l66 118M807 608l66 120M632 1035l103 178M982 920l102 180"/></g>
            <g class="strip"><path d="M495 272l104 180M846 158l101 178M708 638l68 120M1059 525l67 114M884 948l102 178M1232 828l105 182"/></g>
            <g class="rapid">
              <path d="M248 272l252-84M598 157l252-85M234 276l28 50M584 160l34 56"/>
              <path class="soft" d="M262 326l77 132M618 216l71 130M584 160l14 290M949 285l116 160M716 558l94-31M872 667l250-81M523 783l250-80M463 645l175 305M638 955l97 200M638 948l355 115M988 830l367 118M987 1069l97-28"/>
            </g>
            <g class="lift"><path d="M233 278v48M248 274v50M500 188v55M580 165v45M598 160v50M849 74v50M598 412l12 25M949 294l12 24M970 875l13 18M622 990l14 15"/>
              <path class="dash" d="M339 458v50M688 344v45M598 400v50M1064 445v50M463 645v45M715 560v50M811 528v50M872 668v50M1122 588v50M522 785v50M773 703v50M636 948v45M735 1157v50M988 832v50M987 1070v50M1006 1065v50M1084 1042v50M1335 957v50M1355 950v50"/></g>
            <g class="lead"><path d="M230 326q0 28 7 38M495 240l5 24M576 210q0 28 10 36M846 124l3 24M610 435v20M960 318v20M1062 496v24M713 608v28M870 712l-6 24M520 832l-4 20M735 1205l-6 20M1006 1112l-4 16M1084 1088l-6 22M1355 1000l-4 14M620 1000l8 26M970 885l6 26"/></g>
            <g class="exit"><path d="M247 322v26M502 258l2 14M597 206v28M852 144l2 12M338 508v26M687 390v26M596 440v20M948 322v20M460 690v24M810 578v24M1120 636v14M770 748v16M634 998v30M986 880v36M984 1118l-2 18M1333 1004l-4 14"/></g>
            <circle cx="885" cy="943" r="11" fill="#f4a468"/>
            <path class="z" d="M791 676V576l4-54-6-2 9-40 6 42-6 2-2 52z"/>
            <path class="y" d="M791 676l60-24 36-6 62-20-2-10 44-4-38 20-6-2-60 20-36 8z"/>
            <path class="x" d="M791 678l24 44 18 32 26 46-3 3 25 32-6-40-6 4-34-60z"/>
          </g>
          <g class="axis"><g fill="#1c4fe0"><text x="1696" y="688">ZM</text><text x="1695" y="725">ZC</text></g><g fill="#2f9b45"><text x="1746" y="749">YC</text><text x="1788" y="737">YM</text></g><g fill="#d8282e"><text x="1718" y="816">XC</text><text x="1737" y="844">XM</text></g></g>
          <g transform="translate(700 1090) scale(.3333)">
            <path d="M282 460l115-32 53 76-115 33zM282 460l-5 97 54 75 4-95M331 632l115-32 4-96" fill="none" stroke="#c4c8ca" stroke-width="4"/>
            <path d="M366 482l3-75" stroke="#0a2aa8" stroke-width="16" stroke-linecap="round"/><path d="M353 408l18-43 15 43q-15 8-33 0z" fill="#0c34c0"/>
            <path d="M450 506l65-17" stroke="#3cba3c" stroke-width="12"/><path d="M508 476l57-1-50 28z" fill="#3aac3a"/>
            <path d="M390 567l38 54" stroke="#e83a3e" stroke-width="14" stroke-linecap="round"/><path d="M416 632l40 32-14-50q-16 2-26 18z" fill="#e83a3e"/>
          </g>
          <g class="axis"><text x="820" y="1209" fill="#1540e0">Z</text><text x="892" y="1250" fill="#2f9b3a">Y</text><text x="851" y="1321" fill="#c82e32">X</text></g>
        </svg>
        <p class="lyric">此歌曲为没有填词的纯音乐，</p>
      </div>
    </section>
  </main>

  <footer class="status">指定参数或选择路径</footer>

  <footer class="task">
    <button aria-label="开始"><svg viewBox="0 0 24 24"><path d="M4 6l7-1v7H4zM12 5l8-1v8h-8zM4 13h7v7l-7-1zM12 13h8v8l-8-1z" fill="#fff"/></svg></button>
    <button aria-label="搜索"><svg viewBox="0 0 24 24"><circle cx="14" cy="9" r="7" fill="none" stroke="#fff" stroke-width="1.800"/><path d="M9 15l-7 8" stroke="#fff" stroke-width="2"/></svg></button>
    <button class="run" aria-label="应用"><svg viewBox="0 0 24 24"><path d="M0 0h24v24H0z" fill="#f4f4f4"/><path d="M3 3h18v18H3z" fill="#98a0a4"/><path d="M9 3h12v13H9z" fill="#0a88d4"/><path d="M3 3h4v18H3z" fill="#fff"/></svg></button>
    <button class="run" aria-label="Edge"><svg viewBox="0 0 24 24"><circle cx="12" cy="12" r="12" fill="#1780cf"/><path d="M1 8Q6-1 14 0q10 2 10 11-1 5-8 4 2-7-5-7T1 8z" fill="#35c48c"/><path d="M9 11q-2 9 12 9-10 8-17 1Q-2 12 9 11z" fill="#0c4f9a"/></svg></button>
    <button aria-label="微信"><svg viewBox="0 0 24 24"><ellipse cx="9" cy="9" rx="9" ry="8" fill="#2cc84a"/><ellipse cx="17" cy="15" rx="7" ry="6" fill="#ececec"/><path d="M3 20l1-5h5zM22 22l-5-2 4-2z" fill="#e4e4e4"/><path d="M6 7h.1M12 7h.1" stroke="#0d4a1c" stroke-width="2" stroke-linecap="round"/></svg></button>
    <button aria-label="计算器"><svg viewBox="0 0 24 24"><path d="M3 0h18v24H3z" fill="#6e7f8c"/><path d="M5 2h14v4H5z" fill="#5cc0ea"/><path d="M5 8h4v4H5zM10 8h4v4h-4zM15 8h4v4h-4zM5 13h4v4H5zM10 13h4v4h-4zM5 18h4v4H5zM10 18h4v4h-4z" fill="#d4dde4"/><path d="M15 13h4v9h-4z" fill="#123f78"/></svg></button>
    <button class="run now" aria-label="NX"><span class="nx">NX</span></button>
    <button class="run" aria-label="QQ音乐"><svg viewBox="0 0 24 24"><circle cx="12" cy="12" r="12" fill="#fbd90a"/><path d="M9 3l7-2-2 4-4 1 4 8q2 6-4 7-5-1-3-6 2-2 4-1z" fill="#18a85c"/></svg></button>
    <button class="run" aria-label="资源管理器"><svg viewBox="0 0 24 24"><path d="M2 3h8l2 2h10v16H2z" fill="#f2b632"/><path d="M2 8h20v13H2z" fill="#fbd878"/><path d="M5 21v-8h14v8h-4v-4H9v4z" fill="#2b88d8"/></svg></button>
    <button class="run" aria-label="AutoCAD"><span class="acad">A</span></button>
    <div class="tray">
      <svg viewBox="0 0 16 16"><path d="M5 1h6v4H5zM3 5h9v10H3z" fill="none" stroke="#fff"/><path d="M10 13l2 2 4-4" stroke="#fff" fill="none"/></svg>
      <svg viewBox="0 0 16 16"><path d="M0 0h16v16H0z" fill="#1a1c1a"/><path d="M8 4h6v8H8z" fill="#76b82a"/><path d="M2 8q4-5 9-1-4 5-9 1zM5 8q2-2 4 0" fill="none" stroke="#76b82a"/></svg>
      <svg viewBox="0 0 16 16"><circle cx="8" cy="8" r="8" fill="#9a9a9a"/><path d="M12 6a4 4 0 1 0 0 4M12 3v4H9" fill="none" stroke="#fff" stroke-width="1.500"/></svg>
      <svg viewBox="0 0 24 24"><circle cx="12" cy="12" r="12" fill="#fbd90a"/><path d="M9 3l7-2-2 4-4 1 4 8q2 6-4 7-5-1-3-6 2-2 4-1z" fill="#18a85c"/></svg>
      <svg viewBox="0 0 16 16"><path d="M1 2l7-2 7 2q0 10-7 14Q1 12 1 2z" fill="#1c78c8" stroke="#dfe9f2"/><path d="M11 5q-6-2-5 1 1 2 3 2t1 3H5" fill="none" stroke="#fff" stroke-width="1.500"/></svg>
      <svg viewBox="0 0 24 24"><ellipse cx="9" cy="9" rx="9" ry="8" fill="#2cc84a"/><ellipse cx="17" cy="16" rx="7" ry="6" fill="#ececec"/></svg>
      <svg viewBox="0 0 16 16"><path d="M4 7q0-7 4-7t4 7l2 5H2z" fill="#111"/><path d="M4 8h8l-1 7H5z" fill="#fff"/><path d="M3 7h10v2H3z" fill="#e0202c"/><path d="M5 5h6v1H5z" fill="#f4b020"/></svg>
      <svg viewBox="0 0 16 16"><path d="M1 15Q2 3 15 2M5 15q1-8 10-9M9 15q1-4 6-5" fill="none" stroke="#ddd" stroke-width="1.300"/></svg>
      <svg viewBox="0 0 16 16"><path d="M1 6h3l4-4v12l-4-4H1zM10 5q2 3 0 6M13 3q4 5 0 10" fill="none" stroke="#fff"/></svg>
      <span class="ime">英</span>
      <time>16:44<br>2025/7/9</time>
      <svg class="note" viewBox="0 0 16 16"><path d="M1 2h14v10h-4l-3 3v-3H1z" fill="none" stroke="#fff"/></svg>
    </div>
    <div class="mark"><span>UG</span>爱好者论坛 <span>WWW.UGSNX.COM</span></div>
  </footer>
</div>

<aside class="dlg">
  <header><svg><use href="#gear"/></svg><h2>区域铣 - [区域铣]</h2><button>?</button><button aria-label="关闭"><svg viewBox="0 0 16 16"><path d="M3 3l10 10M13 3L3 13" stroke="#fff" stroke-width="2"/></svg></button></header>
  <section class="geo">
    <h3 class="open">几何体</h3>
    <div class="f"><label for="geo">几何体</label><select id="geo" class="w118"><option>1</option></select><button class="ib"><svg><use href="#d-geom"/></svg></button><button class="ib"><svg><use href="#wrench"/></svg></button></div>
    <div class="f c"><span>指定部件</span><button class="ib"><svg><use href="#d-part"/></svg></button><button class="ib"><svg><use href="#flash"/></svg></button></div>
    <div class="f c"><span>指定检查</span><button class="ib"><svg><use href="#d-clamp"/></svg></button><button class="ib dis" disabled><svg><use href="#flash"/></svg></button></div>
    <div class="f c"><span>指定切削区域</span><button class="ib"><svg><use href="#d-area"/></svg></button><button class="ib"><svg><use href="#flash"/></svg></button></div>
    <div class="f c"><span>指定修剪边界</span><button class="ib"><svg><use href="#d-trim"/></svg></button><button class="ib dis" disabled><svg><use href="#flash"/></svg></button></div>
    <div class="f c"><span>切削区域</span><button class="ib"><svg><use href="#d-region"/></svg></button><button class="ib dis" disabled><svg><use href="#flash"/></svg></button></div>
  </section>
  <section>
    <h3 class="open">驱动方法</h3>
    <div class="f"><label for="mth">方法</label><select id="mth" class="w141"><option>区域铣削</option></select><button class="ib"><svg><use href="#wrench"/></svg></button></div>
  </section>
  <section>
    <h3 class="open">工具</h3>
    <div class="f"><label for="tool">刀具</label><select id="tool" class="w118"><option>D4 (铣刀-5 参数)</option></select><button class="ib"><svg><use href="#d-tool"/></svg></button><button class="ib"><svg><use href="#d-edit"/></svg></button></div>
    <h4>输出</h4><h4>换刀设置</h4>
  </section>
  <section class="shut"><h3>刀轴</h3></section>
  <section>
    <h3 class="open">刀轨设置</h3>
    <div class="f c"><span>切削参数</span><button class="ib"><svg><use href="#r-cutparam"/></svg></button></div>
    <div class="f"><label for="pat">非陡峭切削模式</label><select id="pat" class="w141 zig"><option>往复</option></select></div>
    <div class="f"><label for="step">步距</label><select id="step" class="w141"><option>恒定</option></select></div>
    <div class="f"><label for="maxd">最大距离</label><input id="maxd" class="num hit" type="text" value="0.12000"><select class="w63" aria-label="单位"><option>mm</option></select></div>
    <div class="f"><label for="ang">切削角</label><select id="ang" class="w141"><option>最长的边</option></select></div>
    <div class="f"><label for="intol">内公差</label><input id="intol" class="num" type="text" value="0.00100"><button class="lock" aria-label="锁定"><svg viewBox="0 0 16 16"><path d="M2 7h12v8H2zM4 7V4q1-3 4-3t4 2" fill="none" stroke="#444" stroke-width="1.200"/><circle cx="8" cy="11" r="1.200" fill="#444"/></svg></button></div>
    <div class="f"><label for="outtol">外公差</label><input id="outtol" class="num" type="text" value="0.00100"><i class="slot24"></i></div>
    <label class="tick"><input type="checkbox" checked>在边上延伸</label>
    <div class="f"><label for="dist">距离</label><input id="dist" class="num" type="text" value="0.15000"><select class="w63" aria-label="单位"><option>mm</option></select></div>
    <div class="f c"><span>非切削移动</span><button class="ib"><svg><use href="#r-noncut"/></svg></button></div>
    <div class="f c"><span>进给率和速度</span><button class="ib"><svg><use href="#d-feed"/></svg></button></div>
  </section>
  <section class="shut"><h3>机床控制</h3></section>
  <section class="shut"><h3>程序</h3></section>
  <section class="shut"><h3>描述</h3></section>
  <section class="shut"><h3>选项</h3></section>
  <section>
    <h3 class="open">操作</h3>
    <div class="f acts"><button class="ib"><svg><use href="#d-gen"/></svg></button><button class="ib"><svg><use href="#d-replay"/></svg></button><button class="ib"><svg><use href="#r-verify"/></svg></button><button class="ib"><svg class="dark"><use href="#r-report"/></svg></button><button class="ib gold"><svg><use href="#r-pick"/></svg></button></div>
  </section>
  <div class="fold"><svg viewBox="0 0 10 6"><path d="M0 5h10L5 0z"/></svg></div>
  <footer><button class="pri">确定</button><button class="sec">取消</button></footer>
</aside>
<script src="rows.js"></script>
</body>
</html>
```
FILE: styles.css
```css
:root { --dlg-x: 702px; --dlg-w: 327px; --teal: #006088; }
* { box-sizing: border-box; }
body { margin: 0; background: #fff; color: #1e1e1e; font: 12px/16px "Open Sans", "Noto Sans CJK SC", sans-serif; }
button { margin: 0; padding: 0; border: 0; background: none; font: inherit; color: inherit; }
a { color: inherit; text-decoration: none; }
svg { display: block; flex: none; }
.defs { position: absolute; width: 0; height: 0; }
.app { display: flex; flex-direction: column; height: 100vh; overflow: hidden; }
.left-part { display: flex; flex: 0 0 var(--dlg-x); overflow: hidden; }
.right-part { display: flex; flex: 1; margin-left: var(--dlg-w); }

/* title bar and tabs */
.head { flex: none; position: relative; background: linear-gradient(90deg, #006388, #137094 40%, #217a9c 68%, #2f87a4); color: #fff; }
.progress { position: absolute; left: 1160px; top: 0; width: 241px; height: 1px; background: linear-gradient(90deg, #0078d7 48px, #d8e4ea 48px); }
.title-row { display: flex; justify-content: space-between; align-items: center; height: 28px; padding: 0 4px; }
.quick { display: flex; align-items: center; gap: 7px; }
.quick svg { width: 16px; height: 16px; }
.quick .car { width: 6px; height: 6px; }
.quick .dim { color: #3f8fac; }
.quick .far { margin-left: 6px; }
.quick .bar { width: 1px; height: 18px; background: #00506f; }
.quick .qt { font-size: 11px; margin: 0 -2px 0 -4px; }
.logo { font-size: 20px; line-height: 24px; }
.win-title { font-size: 12px; }
.win { display: flex; align-items: center; gap: 8px; }
.win b { font-size: 13px; font-weight: 800; margin-right: 20px; }
.win svg { width: 16px; height: 16px; }
.tabs { display: flex; height: 28px; font-size: 13px; line-height: 25px; }
.tabs a { padding: 0 16px; white-space: nowrap; border-bottom: 3px solid transparent; }
.tabs .right-part { gap: 2px; }
.tabs .file { padding: 0 25px 0 20px; }
.tabs .on { color: #ffc94a; border-color: #ffc94a; }
.find { display: flex; align-items: center; gap: 10px; padding: 0 7px 2px 0; font-size: 11px; }
.find > svg { width: 16px; height: 16px; }
.search { display: flex; align-items: center; width: 129px; height: 22px; border: 1px solid #777; background: #fff; }
.search input { flex: 1; min-width: 0; border: 0; padding: 0; font: inherit; background: none; }
.search input::placeholder { color: #aaa; }
.search svg { width: 16px; height: 16px; }
.learn { margin-left: -6px; }
.dot { width: 14px; height: 14px; border-radius: 50%; background: #4fa8c8; }

/* ribbon */
.ribbon { flex: none; display: flex; height: 94px; border-bottom: 1px solid #dcdcdc; font-size: 11px; line-height: 16px; position: relative; }
.grp { display: flex; flex-direction: column; flex: none; padding: 2px 8px 0; position: relative; }
.grp::after { content: ""; position: absolute; right: 0; top: 5px; bottom: 4px; width: 1px; background: #d8d8d8; }
.left-part .grp { padding-right: 9px; }
.left-part .tall::after { display: none; }
.row { display: flex; flex: 1; }
.rb { display: flex; flex-direction: column; align-items: center; padding: 3px 4px 0; white-space: nowrap; height: 74px; }
.rb > svg:first-child { width: 32px; height: 32px; margin-bottom: 4px; }
.rb .c, .c.mid { width: 6px; height: 6px; margin-top: 3px; }
.c.mid { margin: 50px 20px 0 4px; }
.off { color: #bdbdbd; }
.hot { background: #cde6eb; box-shadow: inset 0 0 0 1px #a8d3dd; color: #222; }
.cap { display: flex; align-items: center; height: 17px; color: var(--teal); text-align: center; }
.cap span { flex: 1; }
.cap svg { width: 6px; height: 6px; color: #222; }
.tall { padding: 10px 2px 0 5px; }
.filters { display: flex; flex-direction: column; gap: 16px; padding: 4px 5px 0 7px; }
.filters label { display: flex; align-items: center; justify-content: space-between; width: 208px; gap: 4px; height: 23px; white-space: nowrap; }
.filters select { flex: 1; }
.filters label + label select { flex: 0 0 157px; }
.grp.flush { padding-left: 0; padding-right: 7px; }
.pair { display: flex; flex-direction: column; gap: 15px; padding-left: 6px; }
.sm { display: flex; align-items: center; gap: 3px; height: 26px; white-space: nowrap; }
.sm svg { width: 26px; height: 26px; }
.slim { padding: 2px 2px 0; }
.disp { padding-right: 6px; }
.disp .cap { padding-right: 4px; }
.mini { display: flex; flex-direction: column; align-items: center; gap: 6px; padding: 3px 0 0 3px; }
.mini svg { width: 32px; height: 32px; padding: 2px; }
.mini .drill svg { width: 26px; height: 26px; padding: 0; }
.arrows { display: flex; flex-direction: column; gap: 7px; padding: 3px 14px 0 0; }
.arrows svg { width: 16px; height: 16px; }
.arrows .gray { color: #bbb; }
.layer .row { gap: 1px; }
.layer { padding: 10px 8px 0 2px; }
.ribbon-more { position: absolute; right: 6px; bottom: 7px; width: 6px; height: 6px; }

select { appearance: none; height: 23px; border: 1px solid #777; border-radius: 0; padding: 0 16px 0 3px; font: inherit; color: #1e1e1e; background: #fff url("data:image/svg+xml,%3Csvg xmlns='http://www.w3.org/2000/svg' width='8' height='5'%3E%3Cpath d='M0 0h8L4 5z' fill='%23222'/%3E%3C/svg%3E") no-repeat right 5px center; }

/* work area */
.work { display: flex; flex: 1; min-height: 0; }
.rail { flex: 0 0 32px; display: flex; flex-direction: column; background: #dcdcdc; border-right: 1px solid #a0a0a0; }
.rail button { height: 42px; display: grid; place-items: center; padding-left: 4px; }
.rail svg { width: 24px; height: 24px; }
.rail .cog { height: 26px; margin-bottom: 15px; padding: 0; }
.rail .cog svg { width: 14px; height: 14px; }
.rail .sel { background: #fff; margin: 0 -1px 0 2px; padding: 0; border: 1px solid #a0a0a0; border-right: 0; }
.rail .gap-a { margin-top: 16px; }
.rail .gap-b { margin-top: 10px; }
.nav { flex: 0 0 681px; display: flex; flex-direction: column; padding: 0 9px 6px 6px; }
.nav h1 { display: flex; justify-content: space-between; align-items: center; height: 28px; margin: 0; padding: 2px 7px 0 4px; font-size: 12px; font-weight: 400; }
.max { width: 12px; height: 11px; border: 1px solid #222; border-top-width: 2px; }
.frame { flex: 1; min-height: 0; display: flex; flex-direction: column; border: 1px solid #ccc; border-bottom: 0; padding-left: 1px; }
.scroll { flex: 1; min-height: 0; overflow: hidden; }
table { width: 100%; table-layout: fixed; border-spacing: 0; }
.c1 { width: 211px; } .c2 { width: 19px; } .c3 { width: 21px; } .c4 { width: 70px; } .c5 { width: 24px; } .c6 { width: 56px; } .c7 { width: 28px; } .c8 { width: 48px; } .c9 { width: 52px; } .c10 { width: 52px; }
th { height: 22px; padding: 1px 0 0 6px; text-align: left; font-weight: 400; background: #efefef; border-right: 1px solid #ccc; border-bottom: 1px solid #ccc; overflow: hidden; white-space: nowrap; }
.cut { display: block; width: 8px; overflow: hidden; }
.wide-cut { width: 17px; }
td { height: 20px; padding: 0 0 0 4px; line-height: 19px; border-right: 1px solid #e6e6e6; border-bottom: 1px solid #e8e8e8; overflow: hidden; white-space: nowrap; }
td:last-child, th:last-child { border-right: 0; }
td:first-child { padding: 0; border-right: 1px solid #000; }
td svg { width: 15px; height: 16px; }
td:nth-child(2), td:nth-child(3) { padding: 0 0 0 3px; }
tbody tr:nth-child(even) { background: #f9f9f9; }
.tree { display: flex; align-items: center; height: 19px; }
.tree svg { margin-right: 1px; }
.tree .t { padding-left: 2px; flex: 1; }
.root { padding-left: 3px; }
.g { flex: none; height: 20px; margin-left: 9px; width: 11px; --v: repeating-linear-gradient(#999 0 1px, transparent 1px 3px); --h: repeating-linear-gradient(90deg, #999 0 1px, transparent 1px 3px); background: var(--v) 0 0 / 1px 100% no-repeat, var(--h) 0 10px / 100% 1px no-repeat; }
.g.first { background: var(--v) 0 10px / 1px 10px no-repeat, var(--h) 0 10px / 100% 1px no-repeat; }
.g.last { background: var(--v) 0 0 / 1px 10px no-repeat, var(--h) 0 10px / 100% 1px no-repeat; }
.g.v { width: 19px; background: var(--v) 0 0 / 1px 100% no-repeat; }
.g.v + .g { margin-left: 0; }
.g.box::before { content: "−"; display: block; margin: 5px 0 0 -4px; width: 9px; height: 9px; line-height: 7px; font-size: 9px; text-align: center; background: #fff; border: 1px solid #bbb; }
.p { color: #7370f6; }
.n { color: #8ab09a; }
.picked td { background: #8bc0d0; border-color: #b4d6e0; }
.picked td:first-child { background: #fff; border-right-color: #000; }
.picked .t { background: #8bc0d0; height: 19px; }
.hbar { flex: none; display: flex; align-items: center; height: 17px; padding: 1px 0; background: #f0f0f0; }
.hbar i { flex: 1; height: 15px; background: #cdcdcd; }
.hbar svg { width: 8px; height: 8px; margin: 0 5px; }
.split { flex: none; height: 6px; background: #dedede; border: 1px solid #a8a8a8; }
.view { flex: 1; min-width: 0; display: flex; flex-direction: column; border-left: 1px solid #a8a8a8; padding: 0 1px 0 1px; }
.file-tab { flex: none; height: 24px; line-height: 24px; padding-left: 314px; }
.canvas { flex: 1; min-height: 0; position: relative; background: #24262a; border: 1px solid #f29a3e; box-shadow: 0 -2px 0 var(--teal); margin: 2px 0 1px; }
.canvas > svg { width: 100%; height: 100%; }
.model path { vector-effect: non-scaling-stroke; stroke: #2c3236; stroke-width: 1.3px; stroke-linejoin: round; }
.model .thick path { stroke-width: 2px; }
.model .wide path, .model .strip path { stroke: #00ffff; stroke-width: 13px; fill: none; stroke-linecap: round; }
.model .strip path { stroke-width: 9px; }
.model .rapid path { stroke: #e01018; stroke-width: 3px; fill: none; stroke-dasharray: 2 1; }
.model .rapid .soft { stroke: #f06a6e; stroke-width: 2px; stroke-dasharray: 3 1; }
.model .lift path { stroke: #0000e0; stroke-width: 4px; fill: none; }
.model .lift .dash { stroke: #5a62ea; stroke-width: 3px; stroke-dasharray: 3 1; }
.model .lead path { stroke: #fcd6e4; stroke-width: 4px; fill: none; }
.model .exit path { stroke: #ffb414; stroke-width: 4px; fill: none; }
.model .z { stroke: #0a2ea8; fill: #0a2ea8; }
.model .y { stroke: #2ba33a; fill: #2ba33a; }
.model .x { stroke: #e8282c; fill: #e8282c; }
.axis { font: 13px "Liberation Sans", sans-serif; }
.lyric { position: absolute; right: 39px; bottom: 32px; margin: 0; font: 36px/54px "Noto Sans CJK SC", sans-serif; background: linear-gradient(#9bd6f4 22%, #4a97e4 42%, #1c68c4 56%, #6cb4f0 82%); background-clip: text; color: transparent; filter: drop-shadow(0 0 2px #000); }

.status { flex: none; height: 22px; padding-left: 3px; line-height: 21px; font-size: 11px; border-top: 1px solid #a8a8a8; }

/* taskbar */
.task { flex: none; display: flex; height: 40px; position: relative; color: #fff; background: linear-gradient(90deg, #1c1f2c, #262230 17%, #1f1f25 28%, #3d2426 34%, #382022 50%, #231d22 62%, #3f1f26 75%, #33212b 85%, #2a2332); }
.task > button { width: 49px; display: grid; place-items: center; border-bottom: 2px solid transparent; }
.task > button svg { width: 24px; height: 24px; }
.run { background: linear-gradient(#76b9ed, #76b9ed) 4px 100% / 41px 2px no-repeat border-box; }
.task > .now { background: linear-gradient(#76b9ed, #76b9ed) 0 100% / 100% 2px no-repeat border-box, #50515f; }
.nx, .acad { width: 24px; height: 24px; font: bold 11px/26px "Liberation Sans", sans-serif; background: #8f1414; box-shadow: -2px 2px 0 #159a96; }
.acad { background: #f3eeee; color: #c0202c; font-size: 23px; line-height: 24px; box-shadow: none; }
.tray { margin-left: auto; display: flex; align-items: center; gap: 8px; padding-right: 25px; }
.tray svg { width: 16px; height: 16px; }
.ime { font-size: 16px; line-height: 20px; }
.tray time { width: 64px; margin-right: 6px; text-align: center; font-size: 12px; line-height: 19px; }
.tray .note { width: 18px; height: 18px; }
.mark { position: absolute; right: 5px; bottom: 3px; font: 16px/20px "Noto Sans CJK SC", sans-serif; color: #b9b4b8; opacity: .8; white-space: pre; }
.mark span { font: 13px/20px "Liberation Mono", monospace; }

/* operation dialog */
.dlg { position: absolute; left: var(--dlg-x); top: 0; width: var(--dlg-w); background: #efefef; border: solid #d4d4d4; border-width: 0 1px 1px; }
.dlg > header { display: flex; align-items: center; gap: 9px; height: 24px; margin: 0 -1px 4px; padding: 0 8px 0 6px; background: var(--teal); color: #fff; }
.dlg > header svg { width: 14px; height: 14px; }
.dlg h2 { flex: 1; margin: 0; font-size: 14px; font-weight: 400; }
.dlg > header button { width: 15px; font-size: 16px; font-weight: 700; }
.dlg > section { display: flex; flex-direction: column; gap: 2px; margin: 0 5px 4px 4px; padding: 0 9px 7px; background: #fff; border-bottom: 1px solid #c4c4c4; }
.dlg > .shut { padding-bottom: 0; }
.dlg h3 { display: flex; align-items: center; height: 26px; margin: 0 0 2px; font-size: 14px; font-weight: 400; color: var(--teal); }
.dlg .shut h3 { height: 22px; margin: 0; padding-top: 3px; }
.dlg h3::before, .dlg h4::before { content: ""; width: 5px; height: 8px; margin: 0 9px 0 1px; background: var(--teal); clip-path: polygon(0 0, 100% 50%, 0 100%); }
.dlg h3.open::before { width: 9px; height: 5px; margin: 0 7px 0 -1px; clip-path: polygon(0 0, 100% 0, 50% 100%); }
.dlg h4 { display: flex; align-items: center; height: 24px; margin: 0; padding-left: 9px; background: #efefef; border: 1px solid #d8d8d8; font-size: 12px; font-weight: 400; color: var(--teal); }
.f { display: flex; align-items: flex-start; gap: 2px; }
.f.c { align-items: center; }
.f > label, .f > span { flex: 1; }
.f > label { line-height: 25px; }
.geo .c span { padding-top: 4px; }
.f select { height: 25px; padding-left: 5px; background-position: right 6px center; }
.w118 { width: 117px; }
.w141 { width: 141px; }
.w63 { width: 63px; }
.f .zig { padding-left: 24px; background-image: url("data:image/svg+xml,%3Csvg xmlns='http://www.w3.org/2000/svg' width='8' height='5'%3E%3Cpath d='M0 0h8L4 5z' fill='%23222'/%3E%3C/svg%3E"), url("data:image/svg+xml,%3Csvg xmlns='http://www.w3.org/2000/svg' width='13' height='11'%3E%3Cpath d='M0 1h12v3H1v3h11v3H0' fill='none' stroke='%231010e0'/%3E%3C/svg%3E"); background-position: right 6px center, 6px center; background-repeat: no-repeat; }
.ib { width: 32px; height: 32px; border: 1px solid #777; background: #fff; display: grid; place-items: center; }
.ib svg { width: 24px; height: 24px; color: #222; }
.ib .dark { color: #555; }
.dis { border-color: #c0c0c0; }
.dis svg { opacity: .4; filter: saturate(.35); }
.num { width: 82px; height: 23px; padding: 3px; border: 1px solid #777; text-indent: 18px; font: 15px/17px "Liberation Mono", monospace; color: #1e1e1e; background: #fff; }
.num.hit { color: #fff; background: linear-gradient(#0078d7, #0078d7) content-box, #fff; }
.lock { width: 24px; height: 24px; border: 1px solid #777; display: grid; place-items: center; }
.lock svg { width: 16px; height: 16px; }
.f:has(.lock) { height: 25px; }
.slot24 { width: 24px; }
.f:has(.slot24) { height: 23px; }
.tick { display: flex; align-items: center; gap: 5px; height: 21px; }
.tick input { appearance: none; width: 13px; height: 13px; margin: 0; border: 1px solid #333; background: #fff url("data:image/svg+xml,%3Csvg xmlns='http://www.w3.org/2000/svg' width='11' height='11'%3E%3Cpath d='M1 5l3 3 6-6' fill='none' stroke='%23222' stroke-width='1.300'/%3E%3C/svg%3E"); }
.acts { padding-left: 82px; }
.gold { margin-left: auto; border: 0; background: #ffdd6f; }
.fold { display: grid; place-items: center; height: 13px; margin: 0 7px 0 5px; border-bottom: 1px solid #d4d4d4; }
.fold svg { width: 10px; height: 6px; }
.dlg > footer { display: flex; justify-content: flex-end; gap: 5px; padding: 9px 15px 10px; }
.dlg > footer button { width: 54px; height: 25px; border: 1px solid var(--teal); color: var(--teal); }
.dlg > footer .pri { background: var(--teal); color: #fff; }
```
FILE: rows.js
```js
// name | icon | tool-change mark | colour | cutter | number | allowance | floor | feed | speed
const ops = `型腔铣|cav|ta|p|D10|10|0.1000|0.1000|3000 ...|6000
型腔铣二粗|cav|ta|p|D4|4|0.1200|0.1000|2500 ...|6000
动态铣|dyn|ta|p|D10|10|0.1000|0.1000|3500 ...|7000
底壁铣外形|face|ta|p|D4|4|0.1000|0.1000|2000 ...|6000
面铣|face|ta|p|D50R0.8|1|0.0000|0.0000|1000 ...|5000
2D往复|pla|ta|p|D10|10|0.1500|0.0500|2000 ...|6000
孔铣|hole||n|---|0|0.0500|0.0500|1500 ...|6000
铣螺纹|thr|tb|p|D11.8-L...|1|0.0000||1000 ...|6000
铣螺纹M1.6|thr|tb|p|M1.6-D1.2|17|0.0000||80 m...|7500
铣螺纹M2|thr|tb|p|M2-D1.55|21|0.0000||100 ...|7000
铣螺纹M2.5|thr|tb|p|M2.5-D1....|22|0.0000||120 ...|7000
铣螺纹M3|thr|tb|p|M3-D2.35|23|0.0000||150 ...|7000
铣螺纹M4|thr|tb|p|M4-D3.15|24|0.0000||200 ...|7000
铣螺纹M4-0.5|thr|tb|p|M3-D2.35|23|0.0000||220 ...|6000
铣螺纹M5|thr|tb|p|M5-D3.9|5|0.0000||250 ...|6000
铣螺纹M6|thr|tb|p|M6-D4.8|15|0.0000||280 ...|6000
铣螺纹ST2-2.1|thr|tb|p|M2-D1.55|21|0.0000||120 ...|7000
铣螺纹ST2.5-2.6|thr|tb|p|M2.5-D1....|22|0.0000||150 ...|7000
铣螺纹ST3-3.15|thr|tb|p|M3-D2.35|23|0.0000||200 ...|7000
铣螺纹ST4-4.15|thr|tb|p|M4-D3.15|24|0.0000||230 ...|7000
铣螺纹ST5-5.2|thr|tb|p|M5-D3.9|5|0.0000||250 ...|6000
铣螺纹ST6-6.2|thr|tb|p|M6-D4.8|15|0.0000||250 ...|6000
等高清角|zlv|ta|p|D4|4|0.1200|0.1000|2000 ...|6000
等高层切|zlv|ta|p|D10|10|0.1000|0.0500|2000 ...|6000
螺旋铣槽|zlv|ta|p|D4|4|0.1200|0.0500|2000 ...|6000
螺旋等高|zlv|ta|p|D4R0.5|8|0.0000|0.0000|2000 ...|7000
往复等高-粗|zlv|ta|p|D4|4|0.0800|0.0600|2000 ...|6000
往复等高-精|zlv|ta|p|D4R0.5|8|0.0000|0.0000|2000 ...|7000
等高光侧|zlv|ta|p|D10-NEW|11|0.0000|0.0000|600 ...|6000
2D倒角|pla|ta|p|D4-45|3|0.0000|0.0000|1000 ...|6000
等高倒角|zlv|||D4-45|3|0.0000|0.0000|1000 ...|6000
区域铣|area|ta|picked|D4|4|0.0000|0.0000|2000 ...|7000
引导曲线|curve|ta|p|R2|11|0.0000|0.0000|2000 ...|7000
钻孔|dri|ta|p|D4-45|3|||100 ...|2500
底壁铣-底|face||n|---|0|0.2000|0.0000|1200 ...|6000
底壁铣-侧|face||n|---|0|0.0000|0.0000|600 ...|6000
平面铣层切开粗|pla|ta|p|D10|10|0.1000|0.1000|2500 ...|6000
平面铣斜插开粗|pla|ta|p|D4|4|0.1000|0.1000|2500 ...|6000
平面铣内腔开粗|pla|ta|p|D10|10|0.1000|0.1000|2500 ...|6000
平面铣动态开粗|pla|||D10|10|0.1000|0.1000|3000 ...|7000
平面铣|pla|ta|p|D10-NEW|11|0.0000|0.0000|600 ...|6000
T刀槽铣|tsl||n|---|0|||1500 ...|6000
平面文本|pla||n|---|0|0.0000|0.0000|1500 ...|8000
3D注释刻字|txt||n|---|0|0.0000|0.0000|1500 ...|7000`.split("\n").map(line => line.split("|"));

const icon = id => id ? `<svg><use href="#${id}"/></svg>` : "";
const row = (cls, tree, cells) => `<tr class="${cls}"><td><div class="tree">${tree}</div></td>${cells.map(c => `<td>${c}</td>`).join("")}</tr>`;
const folder = (tree, time) => row("", tree, ["", "", "", "", time, "", "", "", "", ""]);

let html = folder('<span class="root">NC_PROGRAM</span>', "00:12:32")
  + folder(`<i class="g first"></i>${icon("folder")}<span class="t">未用项</span>`, "00:00:00")
  + folder(`<i class="g box"></i>${icon("no")}${icon("folder")}<span class="t">PROGRAM</span>`, "00:12:32");

ops.forEach(([name, kind, mark, cls, cutter, no, side, floor, feed, speed], i) => {
  const picked = cls === "picked";
  const end = i === ops.length - 1 ? " last" : "";
  html += row(cls,
    `<i class="g v"></i><i class="g${end}"></i>${icon(picked ? "ex" : "no")}${icon(kind)}<span class="t">${name}</span>`,
    [icon(mark), icon(picked ? "ok" : "x"), cutter, no, picked ? "00:05:20" : "00:00:00", "1", side, floor, feed, speed + " rpm"]);
});

["1", "2", "3", "4", "5", "6", "7", "8", "工装1", "工装2"].forEach((name, i) => {
  html += folder(`<i class="g${i === 9 ? " last" : ""}"></i>${icon("ok")}${icon("folder")}<span class="t">${name}</span>`, "00:00:00");
});
html += folder("", "");
document.getElementById("rows").innerHTML = html;
```
